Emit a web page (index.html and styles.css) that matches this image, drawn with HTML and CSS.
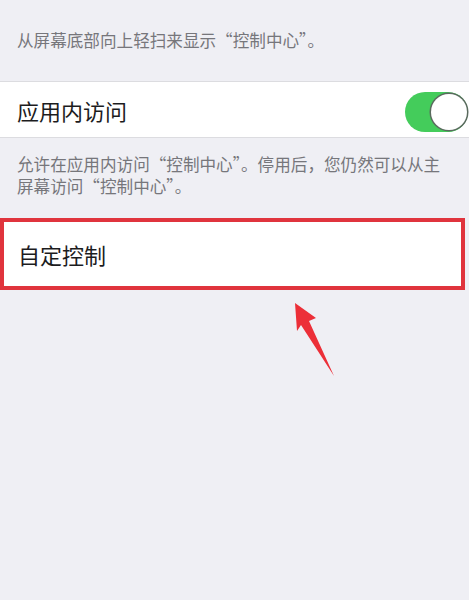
FILE: index.html
```html
<!DOCTYPE html>
<html lang="zh-Hans">
<head>
<meta charset="utf-8">
<link rel="stylesheet" href="styles.css">
</head>
<body>
<div class="page">
  <p class="note note-top">从屏幕底部向上轻扫来显示“控制中心”。</p>
  <div class="group">
    <div class="cell">
      <span class="cell-title">应用内访问</span>
      <span class="switch"><span class="knob"></span></span>
    </div>
  </div>
  <p class="note note-mid">允许在应用内访问“控制中心”。停用后，您仍然可以从主屏幕访问“控制中心”。</p>
  <div class="cell cell-custom">
    <span class="cell-title">自定控制</span>
  </div>
  <svg class="arrow" width="70" height="90" viewBox="0 0 70 90">
    <polygon points="25,12 46,27 39,30 64,85 31,34 27,40" fill="#ec2f38"/>
  </svg>
</div>
</body>
</html>
```
FILE: styles.css
```css
html, body {
  margin: 0;
  padding: 0;
  background: #efeff4;
}
.page {
  position: relative;
  width: 469px;
  height: 600px;
  overflow: hidden;
  font-family: "Noto Sans CJK SC", "Noto Sans", sans-serif;
}
.note {
  margin: 0;
  color: #76767b;
  font-size: 16.6px;
  line-height: 22px;
  padding: 0 14px 0 17px;
}
.note-top {
  padding-top: 29px;
  height: 81px;
  box-sizing: border-box;
}
.note-mid {
  padding-top: 15px;
  height: 80px;
  box-sizing: border-box;
}
.group {
  background: #fff;
  border-top: 1px solid #dcdce0;
  border-bottom: 1px solid #dcdce0;
}
.cell {
  display: flex;
  align-items: center;
  justify-content: space-between;
  height: 55px;
  padding-left: 17px;
  background: #fff;
}
.cell-title {
  font-size: 22px;
  color: #1c1c1e;
}
.switch {
  width: 63px;
  height: 40px;
  border-radius: 20px;
  background: #44cc5b;
  position: relative;
  margin: 5px 1px 0 0;
  flex-shrink: 0;
}
.knob {
  position: absolute;
  right: 1px;
  top: 2px;
  width: 36px;
  height: 36px;
  border-radius: 50%;
  background: #fff;
  box-shadow: 0 0 0 1.5px #5a6a5e;
}
.cell-custom {
  height: 64px;
  margin-right: 4px;
  padding-left: 14px;
  border: 4px solid #e0343d;
  box-sizing: content-box;
}
.arrow {
  position: absolute;
  left: 270px;
  top: 291px;
  overflow: visible;
}
```
